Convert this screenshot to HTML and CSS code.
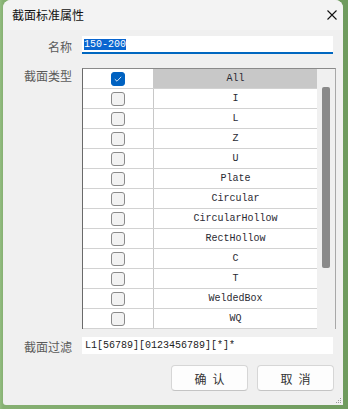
FILE: index.html
```html
<!DOCTYPE html>
<html>
<head>
<meta charset="utf-8">
<link rel="stylesheet" href="styles.css">
</head>
<body>
<div class="dialog">
  <div class="titlebar">
    <span class="title">截面标准属性</span>
    <span class="close"><svg width="10" height="10" viewBox="0 0 10 10"><path d="M0.5 0.5L9.5 9.5M9.5 0.5L0.5 9.5" stroke="#111" stroke-width="1.1" fill="none"/></svg></span>
  </div>
  <div class="form">
    <div class="row row-name">
      <label class="lbl">名称</label>
      <div class="input name-input"><span class="sel">150-200</span></div>
    </div>
    <div class="row row-type">
      <label class="lbl">截面类型</label>
      <div class="list">
        <div class="rows">
          <div class="tr head"><div class="cb-cell"><span class="cb checked"><svg width="8" height="6" viewBox="0 0 8 6"><path d="M0.8 3.2L3 5.2L7.2 0.8" stroke="#cfe0f5" stroke-width="1" fill="none"/></svg></span></div><div class="name">All</div></div>
          <div class="tr"><div class="cb-cell"><span class="cb"></span></div><div class="name">I</div></div>
          <div class="tr"><div class="cb-cell"><span class="cb"></span></div><div class="name">L</div></div>
          <div class="tr"><div class="cb-cell"><span class="cb"></span></div><div class="name">Z</div></div>
          <div class="tr"><div class="cb-cell"><span class="cb"></span></div><div class="name">U</div></div>
          <div class="tr"><div class="cb-cell"><span class="cb"></span></div><div class="name">Plate</div></div>
          <div class="tr"><div class="cb-cell"><span class="cb"></span></div><div class="name">Circular</div></div>
          <div class="tr"><div class="cb-cell"><span class="cb"></span></div><div class="name">CircularHollow</div></div>
          <div class="tr"><div class="cb-cell"><span class="cb"></span></div><div class="name">RectHollow</div></div>
          <div class="tr"><div class="cb-cell"><span class="cb"></span></div><div class="name">C</div></div>
          <div class="tr"><div class="cb-cell"><span class="cb"></span></div><div class="name">T</div></div>
          <div class="tr"><div class="cb-cell"><span class="cb"></span></div><div class="name">WeldedBox</div></div>
          <div class="tr"><div class="cb-cell"><span class="cb"></span></div><div class="name">WQ</div></div>
        </div>
        <div class="scrollbar"><div class="thumb"></div></div>
      </div>
    </div>
    <div class="row row-filter">
      <label class="lbl">截面过滤</label>
      <div class="input filter-input">L1[56789][0123456789][*]*</div>
    </div>
    <div class="buttons">
      <button class="btn">确认</button>
      <button class="btn">取消</button>
    </div>
  </div>
  <svg class="grip" width="6" height="6" viewBox="0 0 6 6"><rect x="4" y="0" width="1" height="1" fill="#999"/><rect x="2" y="2" width="1" height="1" fill="#999"/><rect x="4" y="2" width="1" height="1" fill="#999"/><rect x="0" y="4" width="1" height="1" fill="#999"/><rect x="2" y="4" width="1" height="1" fill="#999"/><rect x="4" y="4" width="1" height="1" fill="#999"/></svg>
</div>
</body>
</html>
```

FILE: styles.css
```css
html, body {
  margin: 0;
  padding: 0;
}
body {
  width: 348px;
  height: 409px;
  background: linear-gradient(90deg, #93bd80 0px, #86b072 3px, #6f9b5e 100%);
  overflow: hidden;
  font-family: "Noto Sans CJK SC", "Noto Sans", sans-serif;
}
.dialog {
  position: relative;
  margin-left: 3px;
  width: 340px;
  height: 405px;
  background: #f0f0f0;
  border-radius: 8px 8px 0 3px;
  box-sizing: border-box;
}
.titlebar {
  height: 30px;
  display: flex;
  align-items: center;
  padding-left: 9px;
  padding-right: 1px;
  background: #f3f3f3;
  border-radius: 8px 8px 0 0;
}
.title {
  font-size: 12px;
  color: #111;
  line-height: 14px;
}
.close {
  margin-left: auto;
  width: 20px;
  height: 20px;
  display: flex;
  align-items: center;
  justify-content: center;
}
.form {
  display: flex;
  flex-direction: column;
}
.row {
  display: flex;
  gap: 10px;
}
.lbl {
  width: 69px;
  text-align: right;
  font-size: 12px;
  color: #5a5a5a;
  line-height: 14px;
  flex: none;
}
.row-name {
  margin-top: 6px;
  align-items: center;
}
.row-name .lbl {
  margin-top: 4px;
}
.input {
  width: 251px;
  box-sizing: border-box;
  background: #fff;
  font-family: "Liberation Mono", monospace;
  font-size: 10px;
  color: #222;
}
.name-input {
  height: 18px;
  padding: 2px 2px 0;
  border-bottom: 2px solid #0067c0;
  line-height: 14px;
}
.sel {
  background: #0a66d0;
  color: #fff;
}
.row-type {
  margin-top: 14px;
}
.row-type .lbl {
  margin-top: 1px;
}
.list {
  width: 254px;
  height: 261px;
  box-sizing: border-box;
  border-left: 1px solid #6a6a6a;
  border-top: 1px solid #8a8a8a;
  border-right: 1px solid #a8a8a8;
  display: flex;
  overflow: hidden;
  background: #f0f0f0;
}
.rows {
  width: 234px;
  flex: none;
}
.tr {
  display: flex;
  height: 20px;
  box-sizing: border-box;
  border-bottom: 1px solid #d2d2d2;
  background: #fff;
}
.cb-cell {
  width: 70px;
  border-right: 1px solid #c8c8c8;
  display: flex;
  align-items: center;
  justify-content: center;
  flex: none;
}
.cb {
  width: 14px;
  height: 14px;
  box-sizing: border-box;
  border: 1px solid #8a8a8a;
  border-radius: 3px;
  background: #f2f2f2;
  display: flex;
  align-items: center;
  justify-content: center;
}
.cb.checked {
  background: #0062c1;
  border-color: #0062c1;
}
.name {
  flex: 1;
  text-align: center;
  font-family: "Liberation Mono", monospace;
  font-size: 10px;
  line-height: 19px;
  color: #2a2a33;
}
.head .name {
  background: #c8c8c8;
}
.scrollbar {
  flex: 1;
  position: relative;
  background: #f0f0f0;
}
.thumb {
  margin: 18px 0 0 5px;
  width: 8px;
  height: 181px;
  background: #8a8a8a;
  border-radius: 2px;
}
.row-filter {
  margin-top: 7px;
  align-items: center;
}
.row-filter .lbl {
  margin-top: 4px;
}
.filter-input {
  height: 17px;
  padding: 1px 3px 0;
  line-height: 15px;
}
.buttons {
  display: flex;
  justify-content: flex-end;
  gap: 9px;
  margin-top: 11px;
  padding-right: 9px;
}
.btn {
  width: 77px;
  height: 26px;
  background: #fdfdfd;
  border: 1px solid #d6d6d6;
  border-bottom-color: #c4c4c4;
  border-radius: 4px;
  font-family: "Noto Sans CJK SC", sans-serif;
  font-size: 12px;
  color: #333;
  padding: 0 0 0 6px;
  letter-spacing: 6px;
}
.grip {
  position: absolute;
  right: 1px;
  bottom: 1px;
}
```
